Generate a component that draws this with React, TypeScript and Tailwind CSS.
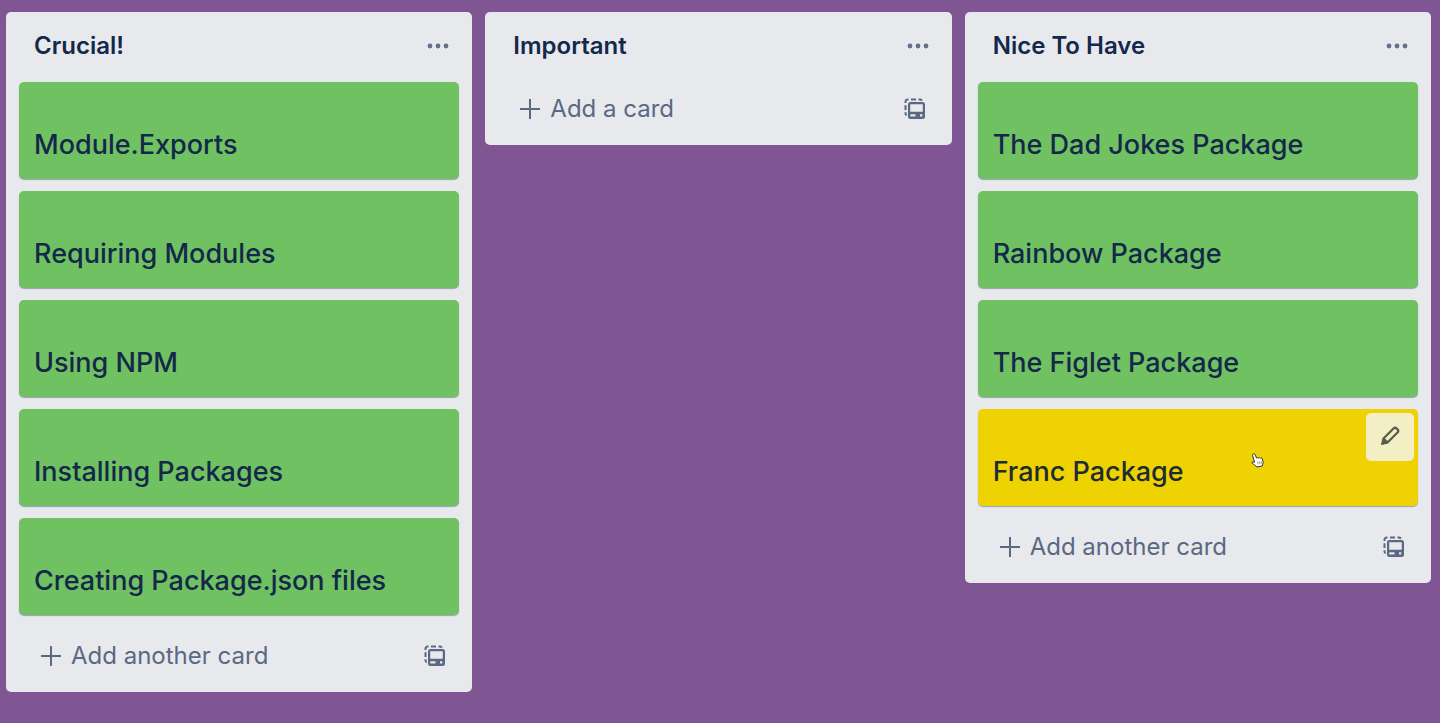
type Card = { title: string; color: "green" | "yellow"; editing?: boolean };
type List = { name: string; cards: Card[] };

const lists: List[] = [
  {
    name: "Crucial!",
    cards: [
      { title: "Module.Exports", color: "green" },
      { title: "Requiring Modules", color: "green" },
      { title: "Using NPM", color: "green" },
      { title: "Installing Packages", color: "green" },
      { title: "Creating Package.json files", color: "green" },
    ],
  },
  { name: "Important", cards: [] },
  {
    name: "Nice To Have",
    cards: [
      { title: "The Dad Jokes Package", color: "green" },
      { title: "Rainbow Package", color: "green" },
      { title: "The Figlet Package", color: "green" },
      { title: "Franc Package", color: "yellow", editing: true },
    ],
  },
];

const cardColors = {
  green: "bg-[#70c162] text-[#14284a]",
  yellow: "bg-[#efd201] text-[#1d2c33]",
};

function DotsIcon() {
  return (
    <svg width="22" height="6" viewBox="0 0 22 6" fill="currentColor" aria-hidden="true">
      <circle cx="3" cy="3" r="2.4" />
      <circle cx="11" cy="3" r="2.4" />
      <circle cx="19" cy="3" r="2.4" />
    </svg>
  );
}

function PlusIcon() {
  return (
    <svg width="20" height="20" viewBox="0 0 20 20" stroke="currentColor" strokeWidth="2" strokeLinecap="round" aria-hidden="true">
      <path d="M10 .5v19M.5 10h19" />
    </svg>
  );
}

function TemplateIcon() {
  return (
    <svg width="22" height="22" viewBox="0 0 22 22" fill="none" aria-hidden="true">
      <path d="M1.500 5V3.500A2 2 0 0 1 3.500 1.500H4.500M7 1.500H12M14.500 1.500H16.200A1.600 1.600 0 0 1 17.700 2.800M1.500 7.300V12M1.500 14.300V15.500A1.500 1.500 0 0 0 2.800 17" stroke="currentColor" strokeWidth="2" />
      <path fillRule="evenodd" fill="currentColor" d="M6.500 4H18.500A2.500 2.500 0 0 1 21 6.500V18.500A2.500 2.500 0 0 1 18.500 21H6.500A2.500 2.500 0 0 1 4 18.500V6.500A2.500 2.500 0 0 1 6.500 4ZM6.200 6.200V13.800H18.800V6.200ZM6.300 16.300V18.500H11.500V16.300ZM16 16.300V18.500H18.300V16.300Z" />
    </svg>
  );
}

function PencilIcon() {
  return (
    <svg width="20" height="20" viewBox="0 0 20 20" fill="none" stroke="currentColor" strokeWidth="2.2" strokeLinejoin="round" aria-hidden="true">
      <path d="M3.500 12.500L13.500 2.500A2.200 2.200 0 0 1 16.600 2.500L17.500 3.400A2.200 2.200 0 0 1 17.500 6.500L7.500 16.500Z" />
      <path d="M2.800 12.800L1.500 18.500L7.200 17.200Z" fill="currentColor" strokeWidth="1" />
    </svg>
  );
}

function HandCursor() {
  return (
    <svg className="pointer-events-none absolute top-11 right-[154px]" width="13" height="15" viewBox="0 0 13 15" aria-hidden="true">
      <path
        d="M2.200 1C3.100 .5 3.800 1 4.200 1.900L5.600 5.100C6 4.500 7 4.500 7.400 5.100C8 4.400 9 4.500 9.400 5.200C10.200 4.700 11 5 11.300 5.900L12 8.500C12.400 10.200 11.600 11.500 11.200 13L5.800 14C4.800 12.500 2.900 11.500 1.200 10.300C.4 9.600 1 8.600 2.100 8.800L3.600 9.300L1.600 2.600C1.400 1.900 1.600 1.300 2.200 1Z"
        fill="#fff"
        stroke="#333"
        strokeWidth="1"
      />
      <path d="M6.500 8.500L7.200 11.500M8.300 8.200L9 11.200M10 8L10.500 10.800" stroke="#777" strokeWidth=".7" />
    </svg>
  );
}

function CardItem({ card }: { card: Card }) {
  return (
    <li className={`relative flex h-[97px] items-end rounded-[5px] px-[15px] pb-4 shadow-[0_1px_1px_#091e4259] ${cardColors[card.color]}`}>
      <h3 className="text-[27px] leading-9 font-medium">{card.title}</h3>
      {card.editing && (
        <>
          <button type="button" aria-label="Edit card" className="absolute top-1 right-1 flex size-12 items-center justify-center rounded-[5px] bg-[#f3eec3] pb-0.5 text-[#555c48]">
            <PencilIcon />
          </button>
          <HandCursor />
        </>
      )}
    </li>
  );
}

function ListColumn({ list }: { list: List }) {
  return (
    <section className="min-w-0 flex-1 rounded-[5px] bg-[#e7e9ed] px-[13px] pb-2.5">
      <header className="flex h-[70px] items-center justify-between pr-2.5 pb-0.5 pl-[15px]">
        <h2 className="text-2xl font-semibold text-[#14284a]">{list.name}</h2>
        <button type="button" aria-label="List actions" className="text-[#64718a]">
          <DotsIcon />
        </button>
      </header>
      {list.cards.length > 0 && (
        <ul className="flex flex-col gap-3 pb-3.5">
          {list.cards.map((card) => (
            <CardItem key={card.title} card={card} />
          ))}
        </ul>
      )}
      <footer className="flex h-[53px] items-center justify-between pr-[13px] pl-[22px] text-[#5a6882]">
        <button type="button" className="flex items-center gap-2.5 text-2xl">
          <PlusIcon />
          {list.cards.length > 0 ? "Add another card" : "Add a card"}
        </button>
        <button type="button" aria-label="Create from template">
          <TemplateIcon />
        </button>
      </footer>
    </section>
  );
}

export default function App() {
  return (
    <main className="flex min-h-screen items-start gap-[13px] bg-[#7f5693] pt-3 pr-[9px] pb-3 pl-1.5 font-['Inter','Liberation_Sans',sans-serif]">
      {lists.map((list) => (
        <ListColumn key={list.name} list={list} />
      ))}
    </main>
  );
}
